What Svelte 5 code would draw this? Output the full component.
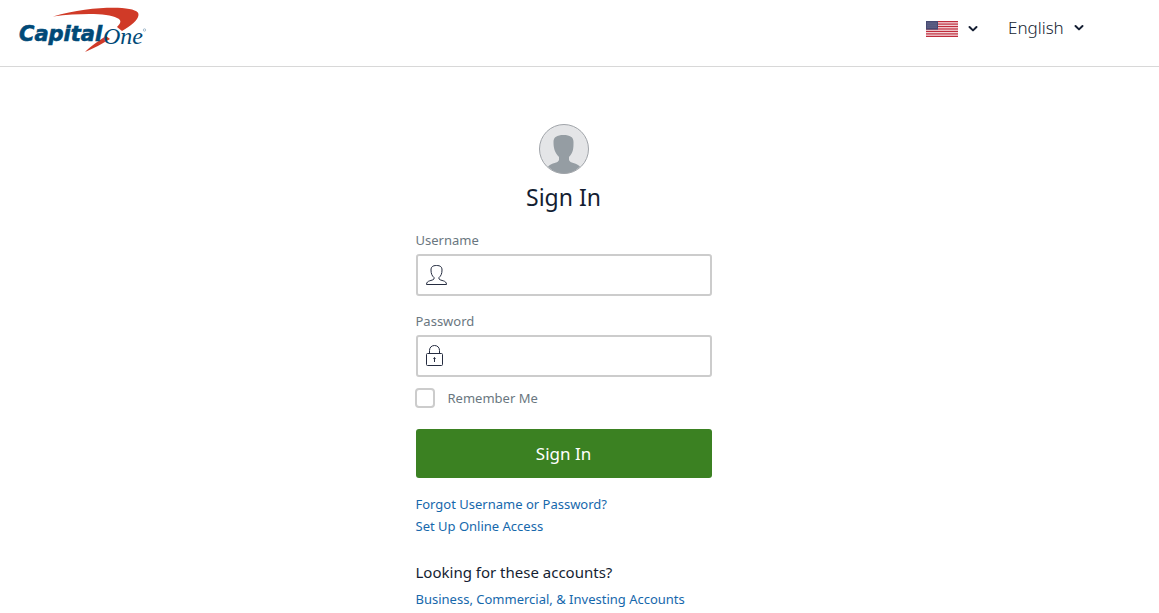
<script lang="ts">
  let country = $state('us');
  let language = $state('en');
  let username = $state('');
  let password = $state('');
  let remember = $state(false);

  const flagStripes = [0, 1, 2, 3, 4, 5, 6];
  const starRows = [2, 4, 6];
  const starCols = [2, 4, 6, 8, 10];

  const links = [
    { label: 'Forgot Username or Password?', href: '#forgot' },
    { label: 'Set Up Online Access', href: '#enroll' }
  ];
</script>

{#snippet chevron()}
  <svg width="10" height="8" viewBox="0 0 10 8" fill="none" stroke="#141e32" stroke-width="2" aria-hidden="true">
    <path stroke-linecap="round" stroke-linejoin="round" d="M1.500 2L5 5.400L8.500 2" />
  </svg>
{/snippet}

<header class="top">
  <a class="logo" href="#home" aria-label="Capital One">
    <svg width="128" height="46" viewBox="0 0 128 46">
      <path
        fill="#d03a27"
        d="M33 10.4C58 3 85 1 102 2C113 3 119 5 118.500 9C118 14 111 20 102 25L97 21C101 17 102 14 97 12C88 7 62 7 33 10.400Z"
      />
      <path fill="#d03a27" d="M65 46C70 41 78 35 86 30L90 33C82 38 74 42 65 46Z" />
      <text class="capital" x="-1" y="35">Capital</text>
      <text class="one" x="83" y="38">One</text>
      <circle cx="124.500" cy="24" r="1.200" fill="none" stroke="#6f93ae" stroke-width=".6" />
    </svg>
  </a>

  <div class="pickers">
    <label class="picker country">
      <svg width="32" height="16" viewBox="0 0 32 16" aria-hidden="true">
        <rect width="32" height="16" fill="#f6dfe2" />
        {#each flagStripes as i}
          <rect y={i * 2.46} width="32" height="1.230" fill="#bf2b3c" />
        {/each}
        <rect width="12" height="8.600" fill="#464a72" />
        {#each starRows as y}
          {#each starCols as x}
            <circle cx={x} cy={y} r=".5" fill="#a4a6bd" />
          {/each}
        {/each}
      </svg>
      <select class="flag-select" bind:value={country} aria-label="Country">
        <option value="us"></option>
      </select>
      {@render chevron()}
    </label>
    <label class="picker">
      <select bind:value={language} aria-label="Language">
        <option value="en">English</option>
      </select>
      {@render chevron()}
    </label>
  </div>
</header>

<main>
  <form onsubmit={(e) => e.preventDefault()}>
    <svg class="avatar" width="50" height="50" viewBox="0 0 50 50" aria-hidden="true">
      <circle cx="25" cy="25" r="24.500" fill="#e4e5e7" />
      <path
        fill="#959da3"
        d="M24.500 11C31 11 34.500 13 34.500 18C34.500 24 34.500 28 30 33V36C31 39.500 37 38.500 41 42.500C36.500 47 31 49.500 25 49.500S13.500 47 9 42.500C13 38.500 19 39.500 20 36V33C15.500 28 14.500 24 14.500 18C14.500 13 18 11 24.500 11Z"
      />
      <circle cx="25" cy="25" r="24.500" fill="none" stroke="#a0a4a9" />
    </svg>
    <h1>Sign In</h1>

    <label class="caption" for="username">Username</label>
    <div class="field">
      <svg width="22" height="22" viewBox="0 0 22 22" fill="none" stroke="#252c40" aria-hidden="true">
        <path d="M10.500 1.500C14.500 1.500 16 3 16 6C16 9.500 15 12 13 13.500V15C14.500 17 20.500 16 20.500 20.500H.5C.5 16 6.500 17 8 15V13.500C6 12 5 9.500 5 6C5 3 6.500 1.500 10.500 1.500Z" />
      </svg>
      <input id="username" type="text" bind:value={username} />
    </div>

    <label class="caption" for="password">Password</label>
    <div class="field">
      <svg width="22" height="22" viewBox="0 0 22 22" fill="none" stroke="#252c40" aria-hidden="true">
        <rect x=".5" y="8.500" width="16" height="12" rx="1" />
        <path d="M3.500 8.500V5.500C3.500 2.500 5.500 .5 8.500 .5S13.500 2.500 13.500 5.500V8.500" />
        <path d="M8.500 12.500V17" />
        <circle cx="8.500" cy="13.500" r=".7" fill="#252c40" />
      </svg>
      <input id="password" type="password" bind:value={password} />
    </div>

    <label class="remember">
      <input type="checkbox" bind:checked={remember} />
      Remember Me
    </label>

    <button type="submit">Sign In</button>

    <ul>
      {#each links as link}
        <li><a href={link.href}>{link.label}</a></li>
      {/each}
    </ul>

    <h2>Looking for these accounts?</h2>
    <a href="#other">Business, Commercial, &amp; Investing Accounts</a>
  </form>
</main>

<style>
  :global(body) {
    margin: 0;
    background: #fff;
    color: #141e32;
    font-family: 'Noto Sans', 'Open Sans', sans-serif;
    font-size: 13px;
    line-height: 22px;
  }

  .top {
    display: flex;
    justify-content: space-between;
    align-items: flex-start;
    box-sizing: border-box;
    height: 67px;
    padding: 6px 75px 0 20px;
    border-bottom: 1px solid #d8d8d8;
  }

  .logo svg {
    display: block;
    overflow: visible;
  }

  .capital {
    font: italic bold 21px 'DejaVu Sans', sans-serif;
    fill: #004977;
    stroke: #004977;
    stroke-width: 0.6px;
  }

  .one {
    font: italic 24px 'Liberation Serif', serif;
    fill: #004977;
  }

  .pickers {
    display: flex;
    gap: 30px;
    padding-top: 10px;
  }

  .picker {
    display: flex;
    align-items: center;
    gap: 10px;
    height: 24px;
  }

  .country {
    gap: 5px;
    padding-top: 1px;
  }

  select {
    appearance: none;
    padding: 0;
    border: 0;
    background: none;
    color: #141e32;
    font: 300 17px/24px 'Noto Sans', 'Open Sans', sans-serif;
  }

  .flag-select {
    width: 0;
  }

  main {
    display: flex;
    justify-content: center;
    padding: 57px 32px 0 0;
  }

  form {
    width: 296px;
  }

  .avatar {
    display: block;
    margin: 0 auto;
  }

  h1 {
    margin: 7px 0 17px;
    font-size: 23px;
    font-weight: 400;
    line-height: 32px;
    text-align: center;
  }

  .caption {
    display: block;
    margin-bottom: 4px;
    color: #6a7780;
    line-height: 20px;
  }

  .field {
    display: flex;
    align-items: center;
    gap: 8px;
    box-sizing: border-box;
    height: 42px;
    margin-bottom: 15px;
    padding: 0 8px;
    border: 2px solid #ccc;
    border-radius: 3px;
  }

  .field input {
    flex: 1;
    min-width: 0;
    padding: 0;
    border: 0;
    outline: none;
    background: none;
    font: inherit;
    font-size: 16px;
  }

  .remember {
    display: flex;
    align-items: center;
    gap: 13px;
    margin-top: -5px;
    color: #6a7780;
  }

  .remember input {
    appearance: none;
    box-sizing: border-box;
    width: 20px;
    height: 20px;
    margin: 0 0 0 -1px;
    border: 2px solid #ccc;
    border-radius: 4px;
    background: #fff;
  }

  .remember input:checked {
    background: #3b8122;
  }

  button {
    width: 100%;
    height: 49px;
    margin-top: 20px;
    border: 0;
    border-radius: 3px;
    background: #3b8122;
    color: #fff;
    font: 17px 'Noto Sans', 'Open Sans', sans-serif;
    cursor: pointer;
  }

  ul {
    margin: 15px 0 24px;
    padding: 0;
    list-style: none;
  }

  a {
    color: #1668ac;
    text-decoration: none;
  }

  h2 {
    margin: 0 0 5px;
    font-size: 15px;
    font-weight: 400;
    line-height: 22px;
  }
</style>
